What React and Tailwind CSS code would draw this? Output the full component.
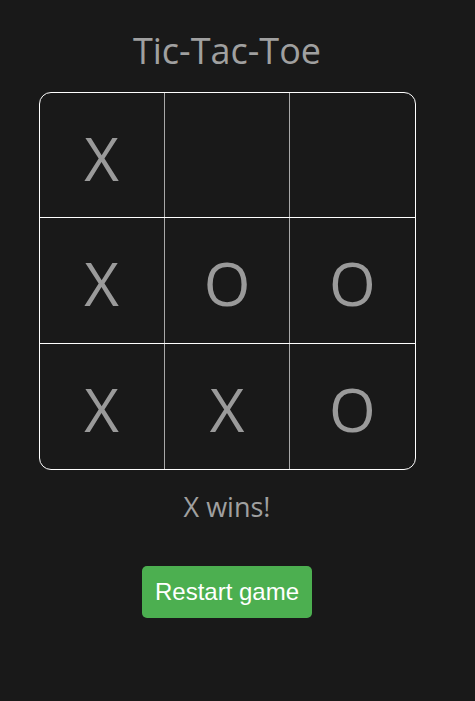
export default function App() {
  const board = ["X", "", "", "X", "O", "O", "X", "X", "O"];
  const rows = [board.slice(0, 3), board.slice(3, 6), board.slice(6, 9)];
  return (
    <div className="min-h-[701px] w-full bg-[#191919]">
      <div
        className="flex w-[454px] flex-col items-center"
        style={{ fontFamily: '"Open Sans", "Noto Sans", sans-serif' }}
      >
        <h1 className="mt-[27px] text-[36px] leading-[48px] text-[#a0a0a0]">Tic-Tac-Toe</h1>
        <div className="mt-[17px] flex h-[378px] w-[377px] flex-col overflow-hidden rounded-[12px] border border-white">
          {rows.map((row, r) => (
            <div
              key={r}
              className={
                "flex h-[126px] " + (r < 2 ? "border-b border-white" : "")
              }
            >
              {row.map((v, c) => (
                <div
                  key={c}
                  className={
                    "flex flex-1 items-center justify-center pt-[5px] text-[60px] text-[#9a9a9a] " +
                    (c < 2 ? "border-r border-[#a8a8a8]" : "")
                  }
                >
                  {v}
                </div>
              ))}
            </div>
          ))}
        </div>
        <div className="mt-[18px] text-[27px] leading-[38px] text-[#a0a0a0]">X wins!</div>
        <button
          className="mt-[40px] h-[52px] w-[170px] rounded-[5px] bg-[#4caf50] text-[24px] text-white"
          style={{ fontFamily: '"Liberation Sans", Arial, sans-serif' }}
        >
          Restart game
        </button>
      </div>
    </div>
  );
}
